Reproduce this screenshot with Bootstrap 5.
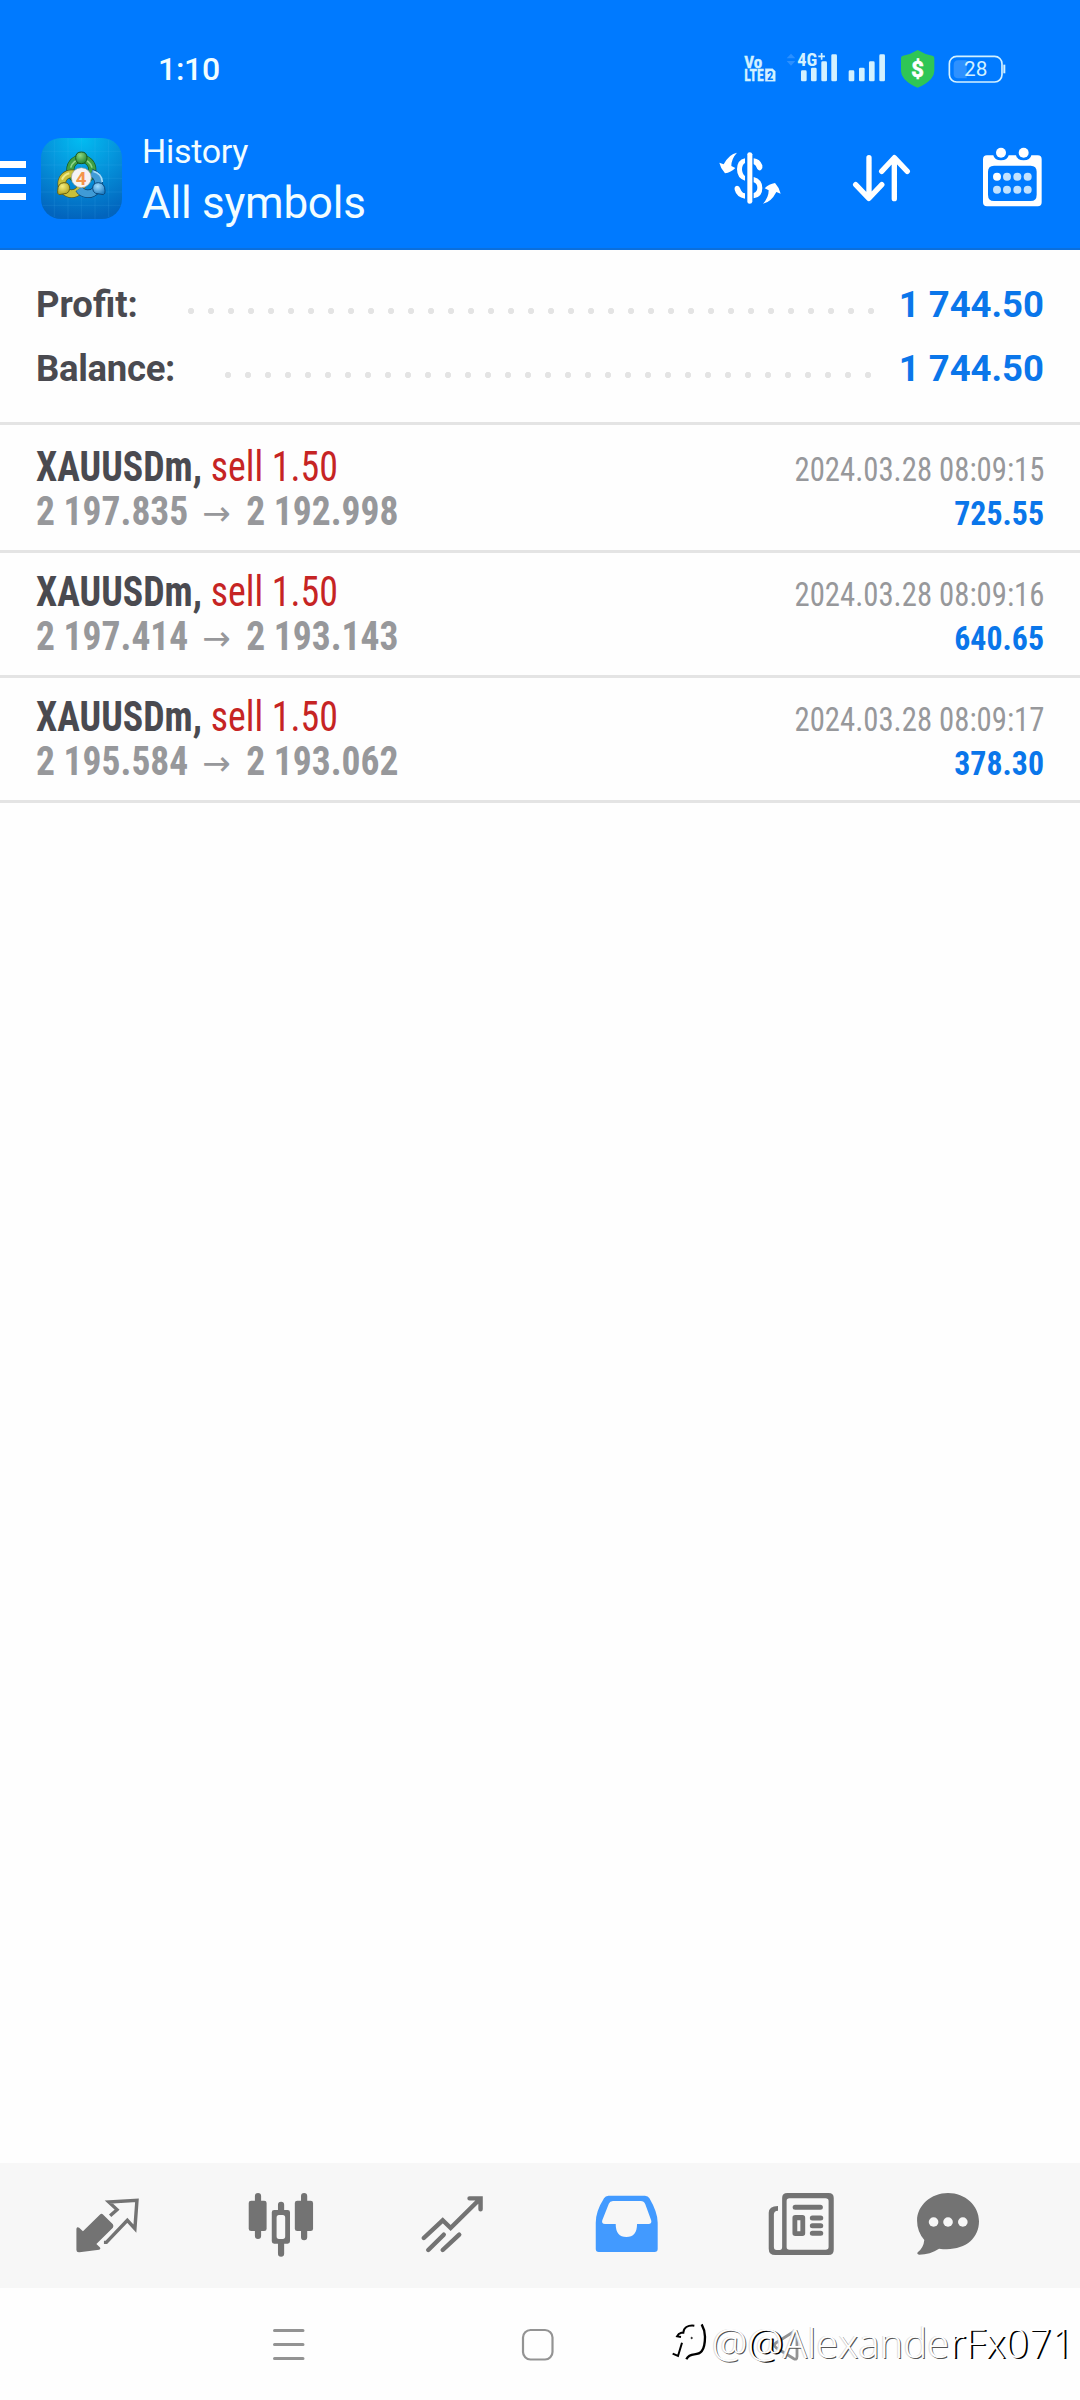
<!DOCTYPE html>
<html lang="en">
<head>
<meta charset="utf-8">
<meta name="viewport" content="width=device-width, initial-scale=1">
<title>History</title>
<link href="https://cdn.jsdelivr.net/npm/bootstrap@5.3.0/dist/css/bootstrap.min.css" rel="stylesheet">
<style>
body{font-family:Roboto,"Liberation Sans",sans-serif;background:#fefefe;color:#4a4a50;height:2400px;overflow:hidden}
svg{display:block;flex:none}
.screen{width:1080px;height:2400px}
.topbar{background:#007aff;color:#f2fdff;border-bottom:2px solid #0b6fdc;height:250px}
.statusbar{height:110px;padding:27px 72px 0 158px}
.clock{font-size:32px;font-weight:500;padding-top:1px;letter-spacing:-.3px;line-height:38px}
.appbar{height:137px;padding-right:35px}
.burger{width:26px;margin-right:15px;gap:9px;margin-top:3px}
.burger i{height:7px;background:#fff}
.titles{margin-left:20px;padding-top:4px}
.t-sub{font-size:34px;line-height:44px;letter-spacing:-.3px}
.t-main{font-size:44px;line-height:60px;letter-spacing:-.25px}
.actions{gap:66.7px}
.totals{padding:23px 36px 21px;border-bottom:3px solid #e4e4e4;margin-bottom:3px;font-size:36.5px;line-height:64px}
.dots{height:8px;margin-top:12px;background:radial-gradient(circle at 10px 4px,#e4e4e4 2.8px,transparent 3.5px) 0 0/20px 8px repeat-x}
.dots-p{width:700px;margin-right:18px}
.dots-b{width:660px;margin-right:21px}
.blue{color:#0a76ea}
.deal{height:125px;padding:17px 36px 0;border-bottom:3px solid #e4e4e4;font-family:"Roboto Condensed",Roboto,sans-serif}
.deal>div{height:44px;line-height:44px}
.sq{display:inline-block;white-space:pre;transform-origin:0 50%}
.deal .sym{font-size:42px;transform:scaleX(.902)}
.sell{color:#c62424}
.prices{font-size:41px;color:#97989b;width:362px}
.prices .sq{transform:scaleX(.915)}
.prices .sq:last-child{transform-origin:100% 50%}
.arr{font:34px/44px "DejaVu Sans",sans-serif;margin-left:-16px;margin-right:-15px}
.deal .time{font-size:33px;color:#97989b;transform:scaleX(.931);transform-origin:100% 50%}
.deal .gain{font-size:33px;transform:scaleX(.965);transform-origin:100% 50%}
.tabs{height:125px;background:#f7f7f7;color:#737373;padding:0 0 2px 20.500px}
.tab{width:173.3px}
.tab-last{width:124px}
.active-tab{color:#429aff}
.sysnav{height:112px;padding-left:270px;color:#939393}
.wm{position:absolute;left:672px;top:28px;color:#fff;font:300 40px/54px "Open Sans","Noto Sans",sans-serif;white-space:nowrap;text-shadow:2px 1px 0 #000,-1px 0 0 #ddd;letter-spacing:.1px}
.wm .soft{text-shadow:1px 1px 0 #555,-1px 0 0 #ddd}
.wm .hard{text-shadow:2px 1px 0 #000}
</style>
</head>
<body>
<main class="screen d-flex flex-column">
<header class="topbar flex-shrink-0">
  <div class="statusbar d-flex align-items-center justify-content-between">
    <span class="clock">1:10</span>
    <div class="d-flex align-items-center">
      <svg width="33.3" height="43.3" viewBox="130 50 100 130" fill="#d3f1ff" stroke="#d3f1ff" stroke-width="1" font-family="Roboto Condensed" font-weight="700">
        <text x="134" y="112" font-size="50" textLength="54" lengthAdjust="spacingAndGlyphs">Vo</text>
        <text x="134" y="153" font-size="50" textLength="58" lengthAdjust="spacingAndGlyphs">LTE</text>
        <path d="M197 115h22l8 8v30h-30z"/><text x="202" y="148" font-size="36" fill="#007aff" stroke="none" textLength="19" lengthAdjust="spacingAndGlyphs">2</text>
      </svg>
      <svg style="margin-left:9.3px" width="53.3" height="43.3" viewBox="258 50 160 130" fill="#d3f1ff">
        <path d="M260 84l13-14 13 14zM260 92l13 14 13-14z" fill="#2b90ff"/>
        <rect x="303" y="120" width="17" height="33" rx="4"/><rect x="333" y="112" width="17" height="41" rx="4"/><rect x="364" y="93" width="17" height="60" rx="4"/><rect x="394" y="72" width="17" height="81" rx="4"/>
        <text x="292" y="107" font-family="Roboto Condensed" font-weight="700" font-size="53" textLength="60" lengthAdjust="spacingAndGlyphs" stroke="#007aff" stroke-width="5" paint-order="stroke">4G</text>
        <path d="M355 78h20M365 68v20" stroke="#d3f1ff" stroke-width="5"/>
      </svg>
      <svg style="margin-left:9px" width="38.3" height="43.3" viewBox="445 50 115 130" fill="#d3f1ff">
        <rect x="447" y="120" width="17" height="33" rx="4"/><rect x="478" y="112" width="17" height="41" rx="4"/><rect x="508" y="93" width="17" height="60" rx="4"/><rect x="539" y="72" width="17" height="81" rx="4"/>
      </svg>
      <svg style="margin-left:13.3px" width="35" height="43.3" viewBox="600 50 105 130">
        <path d="M653 59q22 14 44 17 6 1 6 7v40q0 12-10 23-16 17-40 26-24-9-40-26-10-11-10-23V83q0-6 6-7 22-3 44-17z" fill="#2fc655"/>
        <text x="653" y="139" text-anchor="middle" font-family="Roboto" font-weight="700" font-size="66" fill="#fff" stroke="#fff" stroke-width="2">$</text>
      </svg>
      <svg style="margin-left:13.3px" width="60" height="43.3" viewBox="745 50 180 130">
        <rect x="749" y="78" width="158" height="77" rx="22" fill="none" stroke="#d3f1ff" stroke-width="5"/>
        <path d="M914 103v26" stroke="#d3f1ff" stroke-width="6"/>
        <path d="M776 90h25v54h-25q-14 0-14-14v-26q0-14 14-14z" fill="#2e91ff"/>
        <text x="828" y="137" text-anchor="middle" font-family="Roboto" font-size="60" fill="#d3f1ff" textLength="70" lengthAdjust="spacingAndGlyphs">28</text>
      </svg>
    </div>
  </div>
  <div class="appbar d-flex align-items-center">
    <div class="burger d-flex flex-column"><i></i><i></i><i></i></div>
    <svg width="81" height="81" viewBox="33 39 243 243">
      <defs>
        <radialGradient id="tile" cx=".5" cy="0" r="1"><stop offset="0" stop-color="#02bdf2"/><stop offset=".45" stop-color="#0595dc"/><stop offset="1" stop-color="#0264bd"/></radialGradient>
        <radialGradient id="gg" cx=".4" cy=".3" r=".8"><stop offset="0" stop-color="#8fd880"/><stop offset="1" stop-color="#137a2b"/></radialGradient>
        <radialGradient id="gy" cx=".4" cy=".3" r=".8"><stop offset="0" stop-color="#f5ee80"/><stop offset="1" stop-color="#a99a10"/></radialGradient>
        <radialGradient id="gb" cx=".4" cy=".3" r=".8"><stop offset="0" stop-color="#9fdcff"/><stop offset="1" stop-color="#1173bd"/></radialGradient>
      </defs>
      <rect x="33" y="39" width="243" height="243" rx="60" fill="url(#tile)"/>
      <path d="M73 45v231M114 39v243M154 39v243M195 39v243M236 45v231M38 79h234M33 120h243M33 160h243M33 201h243M38 241h234" stroke="#5cc3f5" stroke-opacity=".2" stroke-width="2" fill="none"/>
      <g fill="none">
        <circle cx="154" cy="134" r="33" stroke="#17571f" stroke-width="24"/><circle cx="154" cy="134" r="33" stroke="#3fa045" stroke-width="20"/><path d="M122 128a33 33 0 0 1 64 0" stroke="#90d58a" stroke-width="5"/>
        <circle cx="125" cy="176" r="30" stroke="#5f5a10" stroke-width="25"/><circle cx="125" cy="176" r="30" stroke="#c9c03a" stroke-width="21"/><path d="M96 164a31 31 0 0 1 22-19" stroke="#efe98b" stroke-width="6"/>
        <path d="M184 144a32 32 0 1 1-37 48" stroke="#0b4170" stroke-width="25"/><path d="M184 144a32 32 0 1 1-37 48" stroke="#3f9bd6" stroke-width="21"/><path d="M190 139a33 33 0 0 1 27 32" stroke="#a4dcfa" stroke-width="5"/>
      </g>
      <path d="M137 98q0-17 17-17t17 17q0 18-17 18t-17-18z" fill="url(#gg)" stroke="#17571f" stroke-width="3"/>
      <path d="M83 197q0-23 19-24 17 0 17 17 0 11-9 15l-23 4q-6-3-4-12z" fill="url(#gy)" stroke="#6a6310" stroke-width="3"/>
      <path d="M225 197q0-23-20-24-17 0-17 17 0 11 9 15l23 4q7-3 5-12z" fill="url(#gb)" stroke="#0b4a80" stroke-width="3"/>
      <circle cx="154" cy="158" r="30" fill="#f5f3f5" stroke="#8b9a8c" stroke-width="2"/>
      <text x="153" y="179" text-anchor="middle" font-family="Roboto" font-weight="700" font-size="56" fill="#f3954a">4</text>
    </svg>
    <div class="titles"><div class="t-sub">History</div><div class="t-main">All symbols</div></div>
    <div class="actions d-flex ms-auto">
      <svg width="66.7" height="66.7" viewBox="50 346 200 200" fill="#fff">
        <path d="M141 374q0-6 7-6t8 6v142q-1 6-8 6t-7-6z"/>
        <path d="M134 386q-24 5-24 33 0 27 24 34v-14q-9-7-9-20 0-14 9-19zM160 386q19 2 26 21 2 9-4 14-6 4-11-3-4-12-11-15zM134 491q-10-2-14-14-3-9-10-9-9 1-7 12 5 22 31 27zM160 442q26 7 26 33 0 28-26 31v-16q11-4 11-16 0-12-11-16z"/>
        <path id="swap" d="M110 369q-24 4-40 35l-13-5q4 18 17 32 18-3 31-16l-12-6q0-22 17-40z"/>
        <use href="#swap" transform="rotate(180 149 445.500)"/>
      </svg>
      <svg width="63.3" height="66.7" viewBox="450 346 190 200" fill="none" stroke="#fff" stroke-width="16" stroke-linecap="round" stroke-linejoin="round"><path d="M507 384v118M467 465l39.500 41 39-41M583 507V389M545 425l38-41 39 41"/></svg>
      <svg width="65" height="66.7" viewBox="840 346 195 200" fill="#fff">
        <path fill-rule="evenodd" d="M861 377h19q3 15 23 15t23-15h22q3 15 23 15t23-15h19q12 0 12 12v129q0 12-12 12H861q-12 0-12-12V389q0-12 12-12zM882 408q-18 0-18 18v69q0 19 18 19h110q18 0 18-19v-69q0-18-18-18z"/>
        <circle cx="903" cy="369" r="15"/><circle cx="971" cy="369" r="15"/><circle cx="891" cy="441" r="12"/>
        <g fill="#c2e2ff"><circle cx="921" cy="441" r="12"/><circle cx="952" cy="441" r="12"/><circle cx="983" cy="441" r="12"/><circle cx="891" cy="480" r="12"/><circle cx="921" cy="480" r="12"/><circle cx="952" cy="480" r="12"/><circle cx="983" cy="480" r="12"/></g>
      </svg>
    </div>
  </div>
</header>

<section class="totals fw-bold">
  <div class="d-flex align-items-center"><span>Profit:</span><i class="dots dots-p ms-auto"></i><span class="blue">1 744.50</span></div>
  <div class="d-flex align-items-center"><span style="letter-spacing:-.3px">Balance:</span><i class="dots dots-b ms-auto"></i><span class="blue">1 744.50</span></div>
</section>

<section>
  <article class="deal">
    <div class="d-flex justify-content-between align-items-baseline"><span class="sq sym"><b>XAUUSDm,</b> <span class="sell">sell 1.50</span></span><span class="sq time">2024.03.28 08:09:15</span></div>
    <div class="d-flex justify-content-between align-items-baseline"><span class="prices d-flex justify-content-between align-items-baseline"><b class="sq">2 197.835</b><span class="arr">→</span><b class="sq">2 192.998</b></span><b class="sq gain blue">725.55</b></div>
  </article>
  <article class="deal">
    <div class="d-flex justify-content-between align-items-baseline"><span class="sq sym"><b>XAUUSDm,</b> <span class="sell">sell 1.50</span></span><span class="sq time">2024.03.28 08:09:16</span></div>
    <div class="d-flex justify-content-between align-items-baseline"><span class="prices d-flex justify-content-between align-items-baseline"><b class="sq">2 197.414</b><span class="arr">→</span><b class="sq">2 193.143</b></span><b class="sq gain blue">640.65</b></div>
  </article>
  <article class="deal">
    <div class="d-flex justify-content-between align-items-baseline"><span class="sq sym"><b>XAUUSDm,</b> <span class="sell">sell 1.50</span></span><span class="sq time">2024.03.28 08:09:17</span></div>
    <div class="d-flex justify-content-between align-items-baseline"><span class="prices d-flex justify-content-between align-items-baseline"><b class="sq">2 195.584</b><span class="arr">→</span><b class="sq">2 193.062</b></span><b class="sq gain blue">378.30</b></div>
  </article>
</section>

<nav class="tabs d-flex align-items-center flex-shrink-0 mt-auto">
  <div class="tab d-flex justify-content-center"><svg width="67.1" height="70" viewBox="215 120 195 210" preserveAspectRatio="none" fill="currentColor">
    <path d="M290 194q5-5 10 0l28 29q3 5 0 10l-48 49 10 10q4 5-2 7l-57 8q-9 1-9-7v-64q2-7 8-3l11 11z"/>
    <path d="M320 197l20-18-24-23 82-5-6 85-22-25-61 66-7 0" fill="none" stroke="currentColor" stroke-width="10"/></svg></div>
  <div class="tab d-flex justify-content-center"><svg width="67.1" height="70" viewBox="715 120 195 210" preserveAspectRatio="none" fill="currentColor">
    <path d="M747 138v120M881 138v124M814 164v20M814 280v31" stroke="currentColor" stroke-width="18" stroke-linecap="round"/>
    <rect x="720" y="152" width="52" height="91" rx="7"/><rect x="854" y="152" width="53" height="91" rx="7"/>
    <path fill-rule="evenodd" d="M794 180h39q7 0 7 7v87q0 7-7 7h-39q-7 0-7-7v-87q0-7 7-7zM808 195q-7 0-7 8v56q0 8 7 8h11q7 0 7-8v-56q0-8-7-8z"/></svg></div>
  <div class="tab d-flex justify-content-center"><svg width="67.1" height="70" viewBox="1222 120 195 210" preserveAspectRatio="none" fill="none" stroke="currentColor" stroke-width="13" stroke-linecap="round">
    <path d="M1233 264l55-53 23 23 86-88M1366 145h32v33M1246 300l45-46M1288 300l48-46"/></svg></div>
  <div class="tab d-flex justify-content-center active-tab"><svg width="67.1" height="70" viewBox="155 120 195 210" preserveAspectRatio="none" fill="currentColor">
    <path fill-rule="evenodd" d="M200 137h106q9 0 13 8 24 42 24 73v79q0 9-9 9H172q-9 0-9-9v-79q0-34 24-73 4-8 13-8zM213 153q-9 0-12 8l-19 50q-3 11 8 11h31q0 39 31 39t31-39h33q11 0 8-11l-17-48q-4-10-13-10z"/></svg></div>
  <div class="tab d-flex justify-content-center"><svg width="67.1" height="70" viewBox="660 120 195 210" preserveAspectRatio="none" fill="currentColor">
    <path fill-rule="evenodd" d="M719 129h120q15 0 15 15v155q0 16-15 16H684q-19 0-19-19V188q0-19 27-20v14q-12 1-12 11v98q0 9 8 9h9q7 0 7-9V144q0-15 15-15zM725 145q-8 0-8 8v138q0 8 8 8h105q9 0 9-8V153q0-8-9-8z"/>
    <path d="M742 172h73M792 204h24M792 227h24M792 250h24" stroke="currentColor" stroke-width="15" stroke-linecap="round"/>
    <path fill-rule="evenodd" d="M742 195h21q8 0 8 8v47q0 8-8 8h-21q-8 0-8-8v-47q0-8 8-8zM748 211v33h9v-33z"/></svg></div>
  <div class="tab-last d-flex justify-content-center"><svg width="67.1" height="70" viewBox="1092 120 195 210" preserveAspectRatio="none">
    <path fill="currentColor" d="M1188 129c50 0 90 38 90 85 0 56-47 92-116 82-17 11-37 18-58 18q-8-2-4-7 17-14 19-37-21-26-21-58c0-46 41-83 90-83z"/>
    <g fill="#f7f7f7"><circle cx="1146" cy="216" r="14"/><circle cx="1188" cy="216" r="14"/><circle cx="1231" cy="216" r="14"/></g></svg></div>
</nav>

<footer class="sysnav d-flex align-items-center flex-shrink-0 position-relative">
  <svg width="37" height="37" viewBox="0 0 37 37" fill="none" stroke="currentColor" stroke-width="3" stroke-linecap="round"><path d="M4.500 4.500h28.500M4.500 18.500h28.500M4.500 32.500h28.500"/></svg>
  <svg style="margin-left:212px" width="37" height="37" viewBox="0 0 37 37" fill="none" stroke="currentColor" stroke-width="2.200"><rect x="4" y="4" width="29.500" height="29.500" rx="7.500"/></svg>
  <svg style="margin-left:213px" width="37" height="37" viewBox="0 0 37 37" fill="none" stroke="currentColor" stroke-width="2.800" stroke-linejoin="round"><path d="M7.500 16.500L25 5.500q3-1 3 2v23q0 4-3.500 2L7.500 22q-4-2.800 0-5.500z"/></svg>
  <div class="wm d-flex align-items-center">
    <svg width="40" height="44" viewBox="35 40 120 132" fill="none" stroke="#000" stroke-width="6"><path d="M102 54q-14-2-24 4-8 5-9 17h-6q-9 2-13 11l12 2M65 105l-12 40-16-7"/><path d="M124 50q10 18 10 37 0 31-10 44-6 8-22 9-17 1-24 15" stroke-width="7"/><circle cx="94" cy="91" r="2" stroke-width="3"/></svg><span class="soft">@</span><span>@</span><span class="soft">Alexande</span><span class="hard">rFx071</span>
  </div>
</footer>
</main>
<script src="https://cdn.jsdelivr.net/npm/bootstrap@5.3.0/dist/js/bootstrap.bundle.min.js"></script>
</body>
</html>
